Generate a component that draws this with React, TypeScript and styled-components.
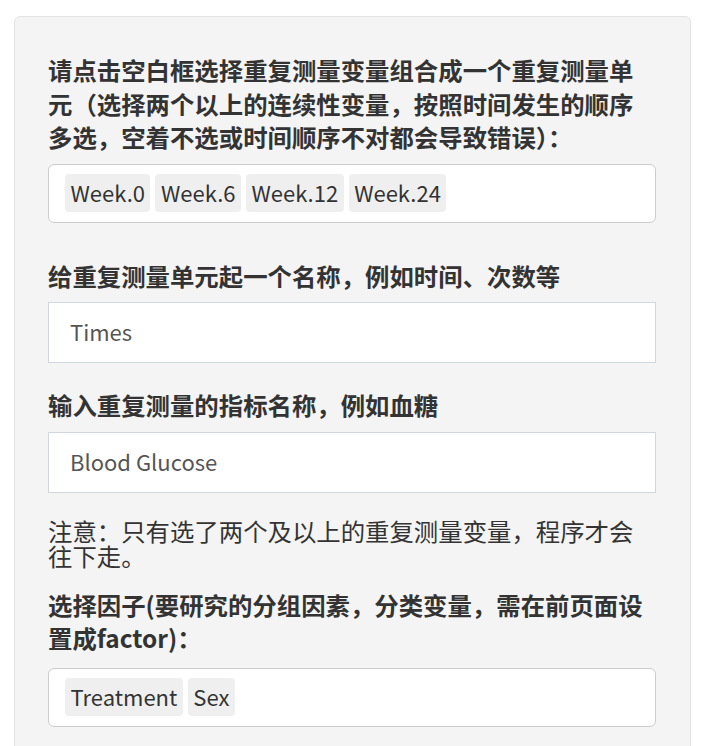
import React from 'react';
import styled, { createGlobalStyle } from 'styled-components';

const GlobalStyle = createGlobalStyle`
    body {
        margin: 0;
        background: #ffffff;
        font-family: "Noto Sans CJK SC", "Liberation Sans", sans-serif;
        color: #333333;
    }
`;

const Page = styled.div`
    padding: 16px 28px 0 14px;
    height: 746px;
    overflow: hidden;
    box-sizing: border-box;
`;

const Well = styled.div`
    background: #f4f4f4;
    border: 1px solid #e3e3e3;
    border-radius: 6px;
    padding: 36px 34px 40px 33px;
    min-height: 760px;
    box-sizing: border-box;
`;

const FormGroup = styled.div<{ $gap: number }>`
    margin-bottom: ${(p) => p.$gap}px;
`;

const Label = styled.div<{ $mb?: number }>`
    font-size: 24.4px;
    line-height: 33.5px;
    font-weight: 700;
    color: #333333;
    margin-bottom: ${(p) => p.$mb ?? 10}px;
`;

const Note = styled.div`
    font-size: 24.4px;
    line-height: 25px;
    color: #333333;
    margin-bottom: 20px;
`;

const SelectBox = styled.div`
    height: 59px;
    box-sizing: border-box;
    background: #ffffff;
    border: 1px solid #cccccc;
    border-radius: 6px;
    padding: 0 16px;
    display: flex;
    align-items: center;
    gap: 5px;
`;

const Tag = styled.span`
    background: #efefef;
    border-radius: 4px;
    height: 38px;
    box-sizing: border-box;
    padding: 0 5.5px 3px;
    display: flex;
    align-items: center;
    font-size: 22px;
    color: #333333;
`;

const TextBox = styled.div`
    height: 61px;
    box-sizing: border-box;
    background: #ffffff;
    border: 1px solid #d2d6de;
    padding: 0 21px 3px;
    display: flex;
    align-items: center;
    font-size: 22px;
    color: #555555;
`;

const App = () => {
    return (
        <Page>
            <GlobalStyle />
            <Well>
                <FormGroup $gap={36}>
                    <Label>
                        请点击空白框选择重复测量变量组合成一个重复测量单元（选择两个以上的连续性变量，按照时间发生的顺序多选，空着不选或时间顺序不对都会导致错误）：
                    </Label>
                    <SelectBox>
                        {['Week.0', 'Week.6', 'Week.12', 'Week.24'].map((t) => (
                            <Tag key={t}>{t}</Tag>
                        ))}
                    </SelectBox>
                </FormGroup>
                <FormGroup $gap={25}>
                    <Label>给重复测量单元起一个名称，例如时间、次数等</Label>
                    <TextBox>Times</TextBox>
                </FormGroup>
                <FormGroup $gap={25}>
                    <Label>输入重复测量的指标名称，例如血糖</Label>
                    <TextBox>Blood Glucose</TextBox>
                </FormGroup>
                <Note>注意：只有选了两个及以上的重复测量变量，程序才会往下走。</Note>
                <FormGroup $gap={28}>
                    <Label $mb={13}>选择因子(要研究的分组因素，分类变量，需在前页面设置成factor)：</Label>
                    <SelectBox>
                        {['Treatment', 'Sex'].map((t) => (
                            <Tag key={t}>{t}</Tag>
                        ))}
                    </SelectBox>
                </FormGroup>
            </Well>
        </Page>
    );
};

export default App;
